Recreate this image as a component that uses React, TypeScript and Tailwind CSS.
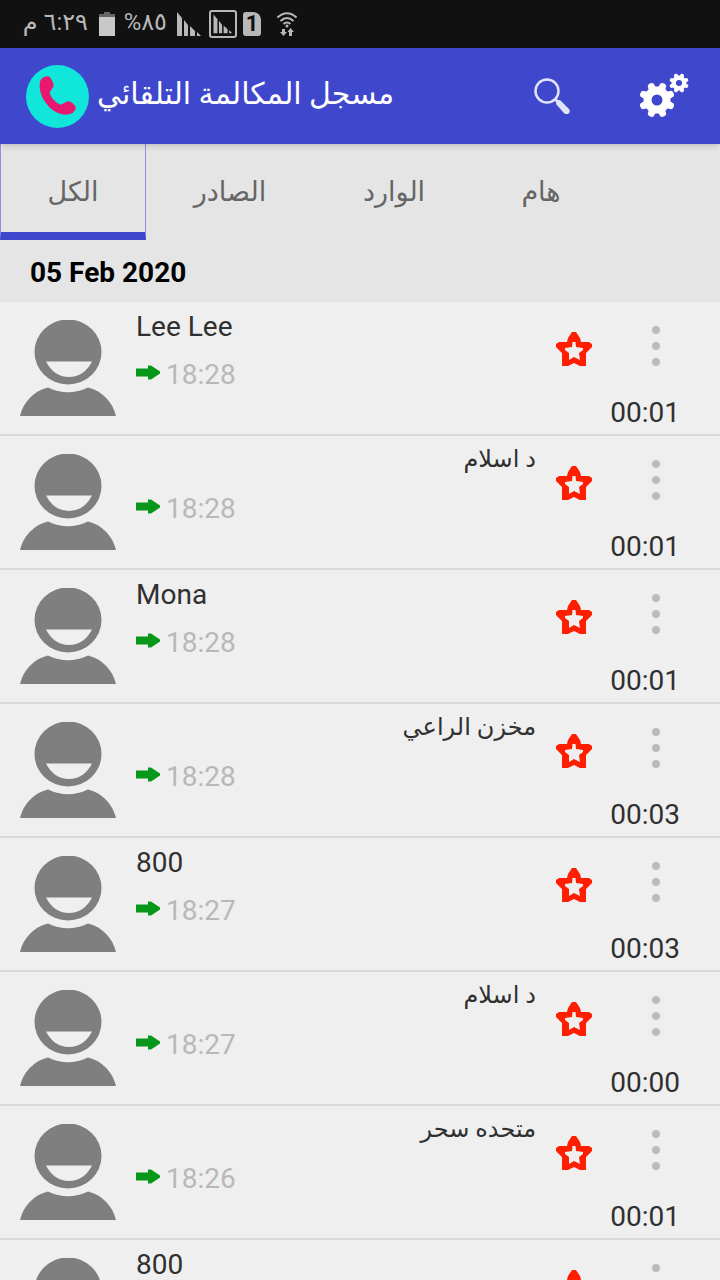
import { useState } from "react";

const tabs = [
  { id: "all", label: "الكل", width: "w-[146px]" },
  { id: "outgoing", label: "الصادر", width: "w-[168px]" },
  { id: "incoming", label: "الوارد", width: "w-[160px]" },
  { id: "important", label: "هام", width: "w-[134px]" },
];

const calls = [
  { id: 1, name: "Lee Lee", time: "18:28", duration: "00:01" },
  { id: 2, name: "د اسلام", time: "18:28", duration: "00:01", rtl: true },
  { id: 3, name: "Mona", time: "18:28", duration: "00:01" },
  { id: 4, name: "مخزن الراعي", time: "18:28", duration: "00:03", rtl: true },
  { id: 5, name: "800", time: "18:27", duration: "00:03" },
  { id: 6, name: "د اسلام", time: "18:27", duration: "00:00", rtl: true },
  { id: 7, name: "متحده سحر", time: "18:26", duration: "00:01", rtl: true },
  { id: 8, name: "800", time: "18:26", duration: "00:01" },
];

const toothAngles = [22.5, 67.5, 112.5, 157.5, 202.5, 247.5, 292.5, 337.5];

function SignalBars() {
  return (
    <>
      <path d="M0 0L5 6V24H0Z" />
      <path d="M7 8L11 13V24H7Z" />
      <path d="M13 14L18 19V24H13Z" />
      <path d="M20 20L24 24H20Z" />
    </>
  );
}

function StatusBar() {
  return (
    <div className="flex h-12 shrink-0 items-center bg-[#111111] pl-6 text-[#b8b8b8]">
      <span dir="rtl" className="w-16 whitespace-nowrap pb-1 text-2xl leading-8">
        ٦:٢٩ م
      </span>
      <svg className="ml-[11px] h-6 w-4" viewBox="0 0 16 24">
        <path d="M5 0H11V2H16V6H0V2H5Z" fill="#666666" />
        <path d="M0 5H16V24H0Z" fill="#c8c8c8" />
      </svg>
      <span dir="rtl" className="ml-[7px] w-[45px] whitespace-nowrap pb-1 text-2xl leading-8">
        ٨٥%
      </span>
      <svg className="ml-2.5 h-6 w-6" viewBox="0 0 24 24" fill="currentColor">
        <SignalBars />
      </svg>
      <svg className="ml-2 h-7 w-7" viewBox="0 0 28 28" fill="currentColor">
        <rect x="1" y="1" width="26" height="26" rx="2" fill="none" stroke="currentColor" strokeWidth="2" />
        <g transform="translate(4.5 4.5) scale(0.78)">
          <SignalBars />
        </g>
      </svg>
      <span className="ml-1.5 flex h-6 w-[18px] items-center justify-center rounded-[3px] rounded-tr-lg bg-[#b8b8b8] text-[22px] font-bold leading-6 text-[#111111]">
        1
      </span>
      <svg className="ml-4 h-6 w-5" viewBox="0 0 20 24" fill="none" stroke="currentColor" strokeWidth="2">
        <path d="M0.5 5.5Q10 -3 19.5 5.5" />
        <path d="M3.5 9Q10 3 16.5 9" />
        <path d="M6.5 12Q10 9 13.5 12" />
        <circle cx="10" cy="14" r="1.5" fill="currentColor" stroke="none" />
        <path d="M5 17H8V20H10L6.5 24L3 20H5Z" fill="currentColor" stroke="none" />
        <path d="M12 24H15V20H17L13.5 16L10.5 20H12Z" fill="currentColor" stroke="none" />
      </svg>
    </div>
  );
}

function Gear({ x, y, size }: { x: number; y: number; size: number }) {
  return (
    <g transform={`translate(${x} ${y}) scale(${size})`}>
      <circle r="9.5" fill="none" stroke="currentColor" strokeWidth="8" />
      {toothAngles.map((angle) => (
        <path
          key={angle}
          d="M-4 -12L-3 -17Q0 -19 3 -17L4 -12Z"
          fill="currentColor"
          transform={`rotate(${angle})`}
        />
      ))}
    </g>
  );
}

function Header() {
  return (
    <header className="relative z-10 flex h-24 shrink-0 items-center bg-[#3f47cc] pl-[26px] pr-[30px] text-white shadow-md">
      <svg className="h-[63px] w-[63px] shrink-0" viewBox="0 0 63 63">
        <circle cx="31.5" cy="31.5" r="31.5" fill="#10e7da" />
        <path
          d="M14.500 18C15 13 20 12 22 12C25 13 26 18 27 20C27 23 23 25 23 28C24 33 29 38 34 40.500C37 41 39 37 43 37C46 38 48 40 49 42C49 47 44 49 38 49C24 47 13 31 14.500 18Z"
          fill="#e9176f"
          stroke="#e9176f"
          strokeWidth="1.500"
          strokeLinejoin="round"
        />
      </svg>
      <h1 dir="rtl" className="ml-2 whitespace-nowrap pb-1 text-3xl leading-10">
        مسجل المكالمة التلقائي
      </h1>
      <div className="ml-auto flex items-center gap-[68px]">
        <button aria-label="بحث">
          <svg className="h-9 w-9" viewBox="0 0 36 36" fill="none" stroke="#dfe3fb">
            <circle cx="13" cy="13" r="11.5" strokeWidth="2.5" />
            <path d="M21 21L25 25" strokeWidth="3" />
            <path d="M22 26Q22 22 26 22L35 31Q37 34 34 36Q31 37 29 34Z" fill="#dfe3fb" stroke="none" />
          </svg>
        </button>
        <button aria-label="الإعدادات">
          <svg className="h-12 w-[52px]" viewBox="0 0 52 48">
            <Gear x={19} y={28} size={1} />
            <Gear x={41} y={11} size={0.55} />
          </svg>
        </button>
      </div>
    </header>
  );
}

function Avatar() {
  return (
    <svg className="h-24 w-24 shrink-0" viewBox="0 0 96 96">
      <ellipse cx="48" cy="32" rx="33.5" ry="32.5" fill="#7f7f7f" />
      <path d="M26 41.5H72Q64 57 49 57Q34 57 26 41.5Z" fill="#efefef" />
      <path d="M0 96C3 83 13 71 28 67.5Q48 77 68 67.5C83 71 93 83 96 96Z" fill="#7f7f7f" />
    </svg>
  );
}

function CallRow({ call }: { call: (typeof calls)[number] }) {
  return (
    <li className="flex h-[134px] shrink-0 border-b-2 border-[#d9d9d9] bg-[#efefef] pl-5 pt-[18px]">
      <Avatar />
      <div className="-mt-[9px] ml-5 flex min-w-0 flex-1 flex-col gap-4">
        <p
          dir={call.rtl ? "rtl" : "ltr"}
          className={`h-8 truncate text-[#303030] ${
            call.rtl ? "text-2xl leading-7" : "text-[28px] leading-8"
          }`}
        >
          {call.name}
        </p>
        <div className="flex h-8 items-center gap-1.5">
          <svg className="mb-1 h-4 w-6" viewBox="0 0 24 16">
            <path d="M0 3.5H12V0.5H15L24 6.5V8.5L15 14.5H12V11.5H0Z" fill="#079719" />
          </svg>
          <span className="text-[28px] leading-8 text-[#b8b8b8]">{call.time}</span>
        </div>
      </div>
      <button aria-label="إضافة إلى هام" className="ml-5 mt-3 h-[34px] w-9">
        <svg className="h-[34px] w-9" viewBox="0 0 36 34">
          <path
            d="M16 0H20L24 6L25 10H33L36 12V15L30 21V34H24L18 31L12 34H6V21L0 15V12L3 10H11L12 6ZM16.5 10L16 15L9 16V18L13 21V28L18 25L24 28L23 21L27 18V16L20 15L19.5 10Z"
            fill="#ff1e00"
            fillRule="evenodd"
          />
        </svg>
      </button>
      <div className="flex w-32 shrink-0 flex-col items-center">
        <button aria-label="خيارات" className="mt-1.5 h-10 w-8">
          <svg className="mx-auto h-10 w-2" viewBox="0 0 8 40" fill="#bbbbbb">
            <circle cx="4" cy="4" r="4" />
            <circle cx="4" cy="20" r="4" />
            <circle cx="4" cy="36" r="4" />
          </svg>
        </button>
        <span className="mr-10 mt-[31px] self-end text-[28px] leading-8 text-[#303030]">
          {call.duration}
        </span>
      </div>
    </li>
  );
}

function App() {
  const [active, setActive] = useState("all");

  return (
    <div className="flex h-screen flex-col overflow-hidden bg-[#e5e5e5] font-[Roboto,'DejaVu_Sans',sans-serif]">
      <StatusBar />
      <Header />
      <nav className="flex h-24 shrink-0">
        {tabs.map((tab) => (
          <button
            key={tab.id}
            onClick={() => setActive(tab.id)}
            className={`${tab.width} border-x border-b-8 pt-2 text-[27px] leading-8 text-[#666666] ${
              active === tab.id
                ? "border-x-[#8d92dc] border-b-[#3f47cc]"
                : "border-transparent"
            }`}
          >
            {tab.label}
          </button>
        ))}
      </nav>
      <h2 className="shrink-0 px-[30px] pb-[13px] pt-[17px] text-[28px] font-bold leading-8 text-black">
        05 Feb 2020
      </h2>
      <ul className="flex min-h-0 flex-1 flex-col overflow-y-auto [scrollbar-width:none]">
        {calls.map((call) => (
          <CallRow key={call.id} call={call} />
        ))}
      </ul>
    </div>
  );
}

export default App;
